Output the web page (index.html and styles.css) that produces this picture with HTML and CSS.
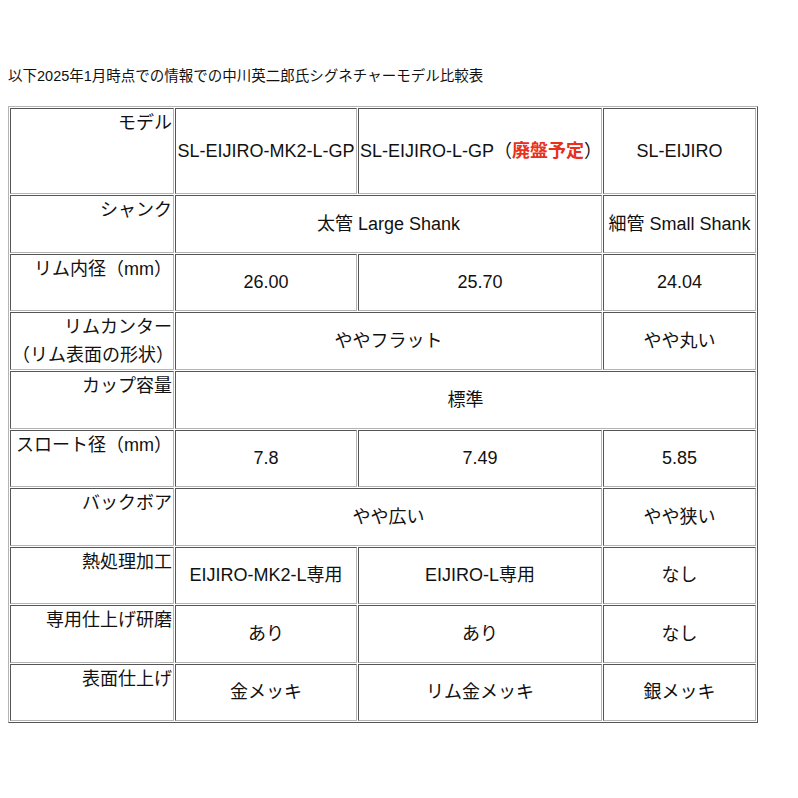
FILE: index.html
```html
<!DOCTYPE html>
<html lang="ja">
<head>
<meta charset="utf-8">
<title>中川英二郎氏シグネチャーモデル比較表</title>
<link rel="stylesheet" href="styles.css">
</head>
<body>
<p class="intro">以下2025年1月時点での情報での中川英二郎氏シグネチャーモデル比較表</p>
<table class="compare">
  <colgroup>
    <col class="c-label">
    <col class="c-mk2">
    <col class="c-l">
    <col class="c-std">
  </colgroup>
  <tbody>
    <tr class="row-head">
      <td class="label">モデル</td>
      <td>SL-EIJIRO-MK2-L-GP</td>
      <td>SL-EIJIRO-L-GP（<span class="discontinued">廃盤予定</span>）</td>
      <td>SL-EIJIRO</td>
    </tr>
    <tr>
      <td class="label">シャンク</td>
      <td colspan="2">太管 Large Shank</td>
      <td>細管 Small Shank</td>
    </tr>
    <tr>
      <td class="label">リム内径（mm）</td>
      <td>26.00</td>
      <td>25.70</td>
      <td>24.04</td>
    </tr>
    <tr>
      <td class="label">リムカンター<br>（リム表面の形状）</td>
      <td colspan="2">ややフラット</td>
      <td>やや丸い</td>
    </tr>
    <tr>
      <td class="label">カップ容量</td>
      <td colspan="3">標準</td>
    </tr>
    <tr>
      <td class="label">スロート径（mm）</td>
      <td>7.8</td>
      <td>7.49</td>
      <td>5.85</td>
    </tr>
    <tr>
      <td class="label">バックボア</td>
      <td colspan="2">やや広い</td>
      <td>やや狭い</td>
    </tr>
    <tr>
      <td class="label">熱処理加工</td>
      <td>EIJIRO-MK2-L専用</td>
      <td>EIJIRO-L専用</td>
      <td>なし</td>
    </tr>
    <tr>
      <td class="label">専用仕上げ研磨</td>
      <td>あり</td>
      <td>あり</td>
      <td>なし</td>
    </tr>
    <tr>
      <td class="label">表面仕上げ</td>
      <td>金メッキ</td>
      <td>リム金メッキ</td>
      <td>銀メッキ</td>
    </tr>
  </tbody>
</table>
</body>
</html>
```

FILE: styles.css
```css
html, body {
  background: #ffffff;
}

body {
  margin: 0;
  padding: 8px;
  color: #111111;
  font-family: "Liberation Sans", "Noto Sans CJK JP", sans-serif;
}

.intro {
  margin: 57px 0 19px;
  font-size: 14.5px;
  line-height: 22px;
}

.compare {
  width: 750px;
  table-layout: fixed;
  border-collapse: separate;
  border-spacing: 1px;
  border-style: solid;
  border-width: 1px;
  border-color: #b4b4b4 #555555 #555555 #b4b4b4;
  font-size: 18px;
  line-height: 28px;
}

.c-label { width: 164px; }
.c-mk2 { width: 182px; }
.c-l { width: 244px; }
.c-std { width: 153px; }

.compare td {
  box-sizing: border-box;
  height: 57.5px;
  padding: 0 1px;
  border-style: solid;
  border-width: 1px;
  border-color: #555555 #b4b4b4 #b4b4b4 #555555;
  text-align: center;
  vertical-align: middle;
  white-space: nowrap;
}

.compare .row-head td {
  height: 86px;
}

.compare td.label {
  text-align: right;
  vertical-align: top;
}

.discontinued {
  color: #e8301c;
  font-weight: bold;
}
```
